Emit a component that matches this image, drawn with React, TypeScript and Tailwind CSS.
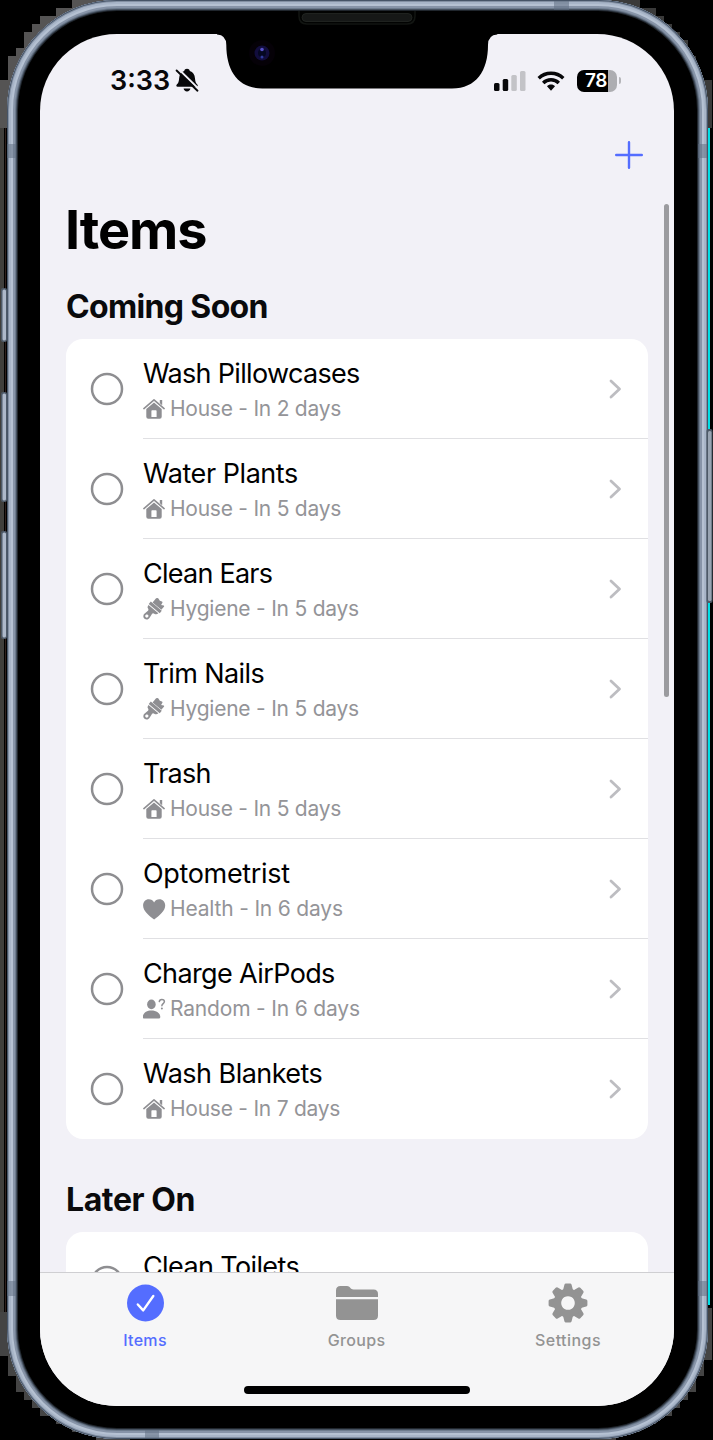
import React from "react";

type Kind = "house" | "brush" | "heart" | "person";

interface Item {
  title: string;
  group: string;
  due: string;
  kind: Kind;
  titleTracking: string;
  metaTracking: string;
}

const SOON: Item[] = [
  { title: "Wash Pillowcases", group: "House", due: "In 2 days", kind: "house", titleTracking: "tracking-[-0.680px]", metaTracking: "tracking-[-0.250px]" },
  { title: "Water Plants", group: "House", due: "In 5 days", kind: "house", titleTracking: "tracking-[-0.450px]", metaTracking: "tracking-[-0.250px]" },
  { title: "Clean Ears", group: "Hygiene", due: "In 5 days", kind: "brush", titleTracking: "tracking-[-0.750px]", metaTracking: "tracking-[-0.230px]" },
  { title: "Trim Nails", group: "Hygiene", due: "In 5 days", kind: "brush", titleTracking: "tracking-[-0.600px]", metaTracking: "tracking-[-0.230px]" },
  { title: "Trash", group: "House", due: "In 5 days", kind: "house", titleTracking: "tracking-[-0.750px]", metaTracking: "tracking-[-0.250px]" },
  { title: "Optometrist", group: "Health", due: "In 6 days", kind: "heart", titleTracking: "tracking-[-0.330px]", metaTracking: "tracking-[-0.180px]" },
  { title: "Charge AirPods", group: "Random", due: "In 6 days", kind: "person", titleTracking: "tracking-[-0.620px]", metaTracking: "tracking-[-0.180px]" },
  { title: "Wash Blankets", group: "House", due: "In 7 days", kind: "house", titleTracking: "tracking-[-0.540px]", metaTracking: "tracking-[-0.250px]" },
];

const LATER: Item[] = [
  { title: "Clean Toilets", group: "House", due: "In 12 days", kind: "house", titleTracking: "tracking-[-0.620px]", metaTracking: "tracking-[-0.250px]" },
];

function GroupIcon({ kind }: { kind: Kind }) {
  return (
    <svg viewBox="0 0 24 24" className="h-6 w-6 shrink-0" fill="#8e8e92">
      {kind === "house" && (
        <>
          <path d="M.9 11.600 11 2.900 21.100 11.600" fill="none" stroke="#8e8e92" strokeWidth="1.600" strokeLinecap="round" strokeLinejoin="round" />
          <path d="M16.800 3h2.400v5.200L16.800 6.200z" />
          <path fillRule="evenodd" d="M3.300 12 11 5.400l7.700 6.600v7.800q0 2-2 2H5.300q-2 0-2-2zM8.400 14v6h5.200V14q0-.7-.7-.7H9.100q-.7 0-.7.7z" />
        </>
      )}
      {kind === "brush" && (
        <g transform="translate(10.600 11.300) rotate(40)">
          <path d="M-4.500-9.200q.8-2 2.400-1.300l2.100.8 2-.9q.9-.3 1.100.6l.5 2.600 2.300-1.300q1-.3 1 .8v4.100h-11.400z" />
          <path d="M-6.500-3.400H7.800v3.200H-6.500z" />
          <path fillRule="evenodd" d="M-6 .7H6.800Q6.600 3.200 3.900 3.700q-1.600.4-1.500 1.700l.6 3.900a3.400 3.400 0 1 1-6.400 0l.6-3.900q.1-1.300-1.500-1.700Q-6 3.200-6 .7zM-.2 8.700a1.600 1.600 0 1 0 .01 0z" />
        </g>
      )}
      {kind === "heart" && (
        <path d="M11.100 22.500C5.800 18.700.1 14 .1 8.600.1 4.900 2.500 2.300 5.800 2.300c2.300 0 4.200 1.200 5.300 3.200 1.100-2 3-3.200 5.300-3.200 3.300 0 5.800 2.600 5.800 6.300 0 5.400-5.800 10.100-11.100 13.900z" />
      )}
      {kind === "person" && (
        <>
          <ellipse cx="8.400" cy="7.400" rx="4.300" ry="4.800" />
          <path d="M-.2 20.100c0-4.300 3.800-6.700 8.600-6.700s8.900 2.400 8.900 6.700q0 1.500-1.600 1.500H1.400Q-.2 21.600-.2 20.100z" />
          <path d="M16.300 4.600c.1-1.500 1.100-2.200 2.500-2.200s2.600.8 2.600 2.200c0 2-2.500 2-2.500 4.200" fill="none" stroke="#8e8e92" strokeWidth="1.500" strokeLinecap="round" />
          <circle cx="18.900" cy="11.400" r="1" />
        </>
      )}
    </svg>
  );
}

function Row({ item, last }: { item: Item; last: boolean }) {
  return (
    <li className="flex h-[100px] shrink-0 pl-6">
      <svg viewBox="0 0 34 34" className="mt-[33px] h-[34px] w-[34px] shrink-0" fill="none" stroke="#8e8e91" strokeWidth="2.500">
        <circle cx="17" cy="17" r="15" />
      </svg>
      <div className={`ml-[19px] flex flex-1 items-start border-b pr-[26px] ${last ? "border-transparent" : "border-[#e0e0e3]"}`}>
        <div className="flex-1 pt-[18px]">
          <div className={`whitespace-nowrap text-[27px] leading-[34px] text-black ${item.titleTracking}`}>{item.title}</div>
          <div className="mt-[6px] flex h-6 items-center text-[#949498]">
            <GroupIcon kind={item.kind} />
            <span className={`ml-[3px] whitespace-nowrap text-[21px] leading-6 ${item.metaTracking}`}>
              {item.group} - {item.due}
            </span>
          </div>
        </div>
        <svg viewBox="0 0 13 20" className="mt-10 h-5 w-[13px]" fill="none" stroke="#bdbdc1" strokeWidth="2.800" strokeLinecap="round" strokeLinejoin="round">
          <path d="M2 2l8.500 8L2 18" />
        </svg>
      </div>
    </li>
  );
}

function StatusBar() {
  return (
    <header className="flex h-[93px] items-start justify-between pl-[70px] pr-[53px] pt-[30px]">
      <div className="flex items-center">
        <span className="w-[62px] whitespace-nowrap text-[27px] font-semibold leading-[34px] text-[#08080a]">3:33</span>
        <svg viewBox="0 0 26 26" className="ml-[2px] h-[26px] w-[26px]" fill="#08080a">
          <path d="M13 .8c1.500 0 2.500.9 2.800 2.200 3.300 1 4.900 3.700 5.200 7.400.2 3.200.9 4.600 2.300 6 .9 1 .4 2.300-.8 2.300H3.600c-1.300 0-1.700-1.300-.8-2.300 1.500-1.400 2.100-2.800 2.300-6 .3-3.700 1.900-6.400 5.100-7.400.3-1.300 1.300-2.200 2.800-2.200zM9.600 20.600h6.800c-.3 1.700-1.600 2.900-3.400 2.900s-3.100-1.200-3.400-2.900z" />
          <path d="M4 .6 25.500 21.600" stroke="#f2f1f7" strokeWidth="2" />
          <path d="M2.600 2.500 23.500 22.700" stroke="#08080a" strokeWidth="1.900" strokeLinecap="round" />
        </svg>
      </div>
      <div className="flex h-[34px] items-center">
        <svg viewBox="0 0 32 20" className="h-5 w-8">
          <rect x="0" y="12" width="5.500" height="8" rx="1.500" fill="#08080a" />
          <rect x="8.700" y="8" width="5.500" height="12" rx="1.500" fill="#08080a" />
          <rect x="17.300" y="4" width="5.500" height="16" rx="1.500" fill="#c3c3c7" />
          <rect x="26" y="0" width="5.500" height="20" rx="1.500" fill="#c3c3c7" />
        </svg>
        <svg viewBox="0 0 28 20" className="ml-[11px] h-5 w-7" fill="none" stroke="#08080a" strokeWidth="3.400">
          <path d="M1.700 7.300a17.600 17.600 0 0 1 24.600 0" />
          <path d="M6.200 12a11 11 0 0 1 15.600 0" />
          <path d="M14 13.600c1.700 0 3 .6 4 1.600L14 19.700 10 15.200c1-1 2.300-1.600 4-1.600z" fill="#08080a" stroke="none" />
        </svg>
        <div className="-mt-px ml-[12px] flex items-center">
          <div className="flex h-[22px] w-10 items-center justify-center overflow-hidden rounded-[7px] bg-[linear-gradient(90deg,#000_31.500px,#adadb1_31.500px)]">
            <span className="pr-[2px] text-[19px] font-semibold leading-[22px] tracking-[-0.300px] text-white">78</span>
          </div>
          <span className="ml-[2px] h-[7px] w-[2px] rounded-r-full bg-[#b5b5b9]" />
        </div>
      </div>
    </header>
  );
}

function TabBar() {
  return (
    <nav className="absolute inset-x-0 bottom-0 flex h-[134px] flex-col items-center border-t border-[#cfcfd2] bg-[#f6f6f7]">
      <div className="grid h-20 w-full grid-cols-[211px_211px_212px] pr-[1px]">
        <div className="flex flex-col items-center pt-[11px] text-[#546dff]">
          <svg viewBox="0 0 38 38" className="h-[38px] w-[38px]">
            <circle cx="18.500" cy="19" r="18.500" fill="#546dff" />
            <path d="M10.800 20.500 16.200 26.400 26.300 12" fill="none" stroke="#fff" strokeWidth="2.400" strokeLinecap="round" strokeLinejoin="round" />
          </svg>
          <span className="mt-2 pr-px text-[16px] font-medium leading-5 tracking-[0.300px]">Items</span>
        </div>
        <div className="flex flex-col items-center pt-[11px] text-[#939393]">
          <svg viewBox="0 0 42 38" className="h-[38px] w-[42px]" fill="#939393">
            <path d="M0 13V6.500Q0 2 4.500 2H11c3 0 3.500 3.500 6.500 3.500h20Q42 5.500 42 10v3z" />
            <path d="M0 15.200h42V31.500q0 4.500-4.500 4.500h-33Q0 36 0 31.500z" />
          </svg>
          <span className="mt-2 text-[16px] font-medium leading-5 tracking-[0.350px]">Groups</span>
        </div>
        <div className="flex flex-col items-center pt-[11px] text-[#939393]">
          <svg viewBox="-20 -20 40 40" className="-my-px h-10 w-10" fill="#939393">
            {[0, 45, 90, 135, 180, 225, 270, 315].map((a) => (
              <path key={a} transform={`rotate(${a})`} d="M-5.200-12-3.600-18.200Q-3.300-19.400-2-19.400H2Q3.300-19.400 3.600-18.200L5.200-12z" />
            ))}
            <path fillRule="evenodd" d="M0-14.500a14.500 14.500 0 1 0 .01 0zM0-6.800a6.800 6.800 0 1 1-.01 0z" />
          </svg>
          <span className="mt-2 text-[16px] font-medium leading-5 tracking-[0.450px]">Settings</span>
        </div>
      </div>
      <span className="mt-[33px] h-2 w-[226px] rounded-full bg-black" />
    </nav>
  );
}

function DeviceEdges() {
  return (
    <svg viewBox="0 0 713 1440" className="absolute inset-0 h-[1440px] w-[713px]" shapeRendering="crispEdges">
      <path fill="#555454" d="M120 0H72V8H56V16H40V24H32V32H24V48H16V56H8V80H0V128H20L120 40z" />
      <path fill="#3a3a3a" d="M600 0H640V8H656V16H664V24H672V32H680V40H688V56H696V80H712V128H690z" />
      <path fill="#444444" d="M0 1312V1356H8V1376H16V1392H24V1400H32V1408H40V1416H56V1424H72V1432H96V1440H130L30 1312z" />
      <path fill="#444444" d="M712 1308V1360H704V1376H696V1392H688V1400H680V1408H672V1416H656V1424H640V1432H616V1440H590L690 1308z" />
      <rect x="0" y="128" width="4" height="1184" fill="#403f3c" />
      <rect x="5" y="128" width="1" height="1184" fill="#30201c" />
      <rect x="708" y="128" width="2" height="1177" fill="#00dfe6" />
    </svg>
  );
}

function DeviceDetails() {
  return (
    <svg viewBox="0 0 713 1440" className="pointer-events-none absolute inset-0 h-[1440px] w-[713px]">
      <path d="M217 33v1.500q9.300.5 9.300 10.500c0 26 12 43.500 36 43.500H452c24 0 36-17.500 36-43.500q0-10 9.300-10.500V33z" fill="#000" />
      <path d="M299 11v5q0 8 8 8H407q8 0 8-8v-5" fill="#020302" stroke="#121512" strokeWidth="1.500" />
      <rect x="302" y="13.500" width="110" height="8" rx="4" fill="#161817" stroke="#252824" strokeWidth=".8" />
      <circle cx="262" cy="53" r="13" fill="#050107" />
      <circle cx="262" cy="53" r="7.500" fill="#120d3d" />
      <circle cx="262" cy="53" r="4" fill="#050822" />
      <circle cx="262" cy="49.500" r="1.800" fill="#5650c8" />
      <circle cx="262" cy="57" r="1.500" fill="#303b9c" />
      <g fill="#607083" fillOpacity=".55">
        <rect x="7" y="144" width="9" height="14" />
        <rect x="698" y="144" width="9" height="14" />
        <rect x="7" y="1281" width="9" height="15" />
        <rect x="698" y="1281" width="9" height="15" />
        <rect x="554" y="1" width="15" height="9" />
        <rect x="145" y="1430" width="14" height="8" />
      </g>
      {[
        [1, 288, 54],
        [1, 392, 110],
        [1, 531, 108],
      ].map(([x, y, h]) => (
        <g key={y}>
          <rect x={x} y={y} width="6" height={h} rx="2" fill="#4d5967" />
          <rect x={x + 1.500} y={y + 1.500} width="3.500" height={h - 3} rx="1.500" fill="#adb8c9" />
        </g>
      ))}
      <rect x="706.500" y="429" width="6" height="174" rx="2" fill="#4d5967" />
      <rect x="708" y="431" width="3.500" height="170" rx="1.500" fill="#98a4b2" />
    </svg>
  );
}

export default function App() {
  return (
    <div className="relative h-[1440px] w-[713px] overflow-hidden bg-black pl-[7px] font-['Inter','Liberation_Sans',sans-serif]">
      <DeviceEdges />
      <div className="relative h-[1439px] w-[701px] rounded-[110px] bg-black pl-[33px] pt-[34px] shadow-[inset_0_0_0_1px_#465467,inset_0_0_0_2px_#8390a3,inset_0_0_0_4px_#a8b5c8,inset_0_0_0_6px_#b5c1d2,inset_0_0_0_8px_#8794a8,inset_0_0_0_9px_#6d7b8d,inset_0_0_0_10px_#465160,inset_0_0_0_11px_#20262d]">
        <main className="relative flex h-[1372px] w-[634px] flex-col overflow-hidden rounded-[77px] bg-[#f2f1f7]">
          <StatusBar />
          <div className="flex h-14 shrink-0 items-center justify-end pr-[31px]">
            <svg viewBox="0 0 28 28" className="h-7 w-7" stroke="#546dff" strokeWidth="2.400" strokeLinecap="round">
              <path d="M14 1.200v25.600M1.200 14h25.600" />
            </svg>
          </div>
          <h1 className="mt-[12px] shrink-0 pl-[25px] text-[54px] font-bold leading-[70px] tracking-[-1.100px] text-black">Items</h1>
          <h2 className="mt-[22px] shrink-0 pl-[26px] text-[32px] font-bold leading-10 tracking-[-0.650px] text-[#0a0a0c]">Coming Soon</h2>
          <ul className="ml-[26px] mt-[12px] h-[800px] w-[582px] shrink-0 rounded-[17px] bg-white">
            {SOON.map((item, i) => (
              <Row key={item.title} item={item} last={i === SOON.length - 1} />
            ))}
          </ul>
          <h2 className="mt-[41px] shrink-0 pl-[26px] text-[32px] font-bold leading-10 tracking-[-0.400px] text-[#0a0a0c]">Later On</h2>
          <ul className="ml-[26px] mt-[12px] w-[582px] shrink-0 rounded-[17px] bg-white">
            {LATER.map((item) => (
              <Row key={item.title} item={item} last />
            ))}
          </ul>
          <span className="absolute right-[5px] top-[170px] h-[493px] w-[5px] rounded-full bg-[#9b9b9f]" />
          <TabBar />
        </main>
      </div>
      <DeviceDetails />
    </div>
  );
}
